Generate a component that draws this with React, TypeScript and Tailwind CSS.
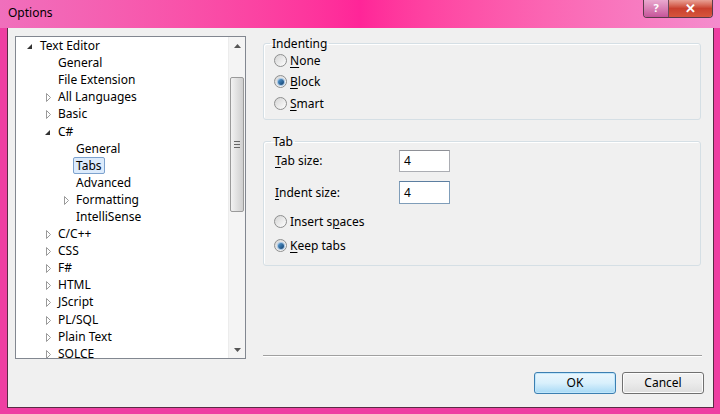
import React from 'react';

type Node = { label: string; level: number; arrow?: 'open' | 'closed'; selected?: boolean };

const tree: Node[] = [
    { label: 'Text Editor', level: 0, arrow: 'open' },
    { label: 'General', level: 1 },
    { label: 'File Extension', level: 1 },
    { label: 'All Languages', level: 1, arrow: 'closed' },
    { label: 'Basic', level: 1, arrow: 'closed' },
    { label: 'C#', level: 1, arrow: 'open' },
    { label: 'General', level: 2 },
    { label: 'Tabs', level: 2, selected: true },
    { label: 'Advanced', level: 2 },
    { label: 'Formatting', level: 2, arrow: 'closed' },
    { label: 'IntelliSense', level: 2 },
    { label: 'C/C++', level: 1, arrow: 'closed' },
    { label: 'CSS', level: 1, arrow: 'closed' },
    { label: 'F#', level: 1, arrow: 'closed' },
    { label: 'HTML', level: 1, arrow: 'closed' },
    { label: 'JScript', level: 1, arrow: 'closed' },
    { label: 'PL/SQL', level: 1, arrow: 'closed' },
    { label: 'Plain Text', level: 1, arrow: 'closed' },
    { label: 'SOLCE', level: 1, arrow: 'closed' },
];

const indent = ['pl-[8px]', 'pl-[26px]', 'pl-[44px]'];

const Arrow = ({ kind }: { kind?: 'open' | 'closed' }) => {
    if (kind === 'open') {
        return (
            <svg width="13" height="17" viewBox="0 0 13 17">
                <polygon points="8,7 8,12 3,12" fill="#333" />
            </svg>
        );
    }
    if (kind === 'closed') {
        return (
            <svg width="13" height="17" viewBox="0 0 13 17">
                <polygon points="4.5,5.5 8.5,9.5 4.5,13.5" fill="#fff" stroke="#9a9a9a" strokeWidth="1" />
            </svg>
        );
    }
    return <span className="w-[13px]" />;
};

const Radio = ({ checked, children }: { checked?: boolean; children: React.ReactNode }) => (
    <div className="flex items-center h-[21px] pl-[10px]">
        <span className="w-[13px] h-[13px] rounded-full border border-[#8e8f8f] bg-gradient-to-br from-[#d4d4d4] to-white flex items-center justify-center">
            {checked && <span className="w-[6px] h-[6px] rounded-full bg-gradient-to-br from-[#5aa0d8] to-[#0f3f6e] shadow-[0_0_0_1px_#a9c7e4]" />}
        </span>
        <span className="ml-[3px]">{children}</span>
    </div>
);

const u = (s: string) => <span className="underline underline-offset-2">{s}</span>;

export default function App() {
    return (
        <div className="w-[720px] h-[414px] bg-[#ee3fa2] flex flex-col text-[12px] text-black overflow-hidden" style={{ fontFamily: '"Noto Sans", "Open Sans", sans-serif' }}>
            {/* title bar */}
            <div className="h-[28px] flex items-start relative bg-gradient-to-r from-[#f06fbc] via-[#ff2598] to-[#f48ccd]">
                <span className="ml-[8px] mt-[4px] text-[12px]">Options</span>
                <div className="ml-auto mr-[7px] flex h-[18px] border border-[#5a3a4a] border-t-0 rounded-b-[4px] overflow-hidden">
                    <div className="w-[25px] bg-gradient-to-b from-[#e9a9cf] to-[#c5549a] flex items-center justify-center text-white font-bold text-[11px] border-r border-[#6a4a5a]">?</div>
                    <div className="w-[43px] bg-gradient-to-b from-[#e8a095] via-[#c9402e] to-[#d6553c] flex items-center justify-center text-white font-bold text-[13px]">✕</div>
                </div>
            </div>

            {/* client */}
            <div className="ml-[7px] mr-[6px] h-[380px] border-l border-r border-b border-[#5a2a45] bg-[#f0f0f0] flex pt-[8px]">
                {/* tree */}
                <div className="ml-[7px] w-[231px] h-[323px] border border-[#828790] bg-white flex overflow-hidden">
                    <div className="flex-1">
                        {tree.map((n, idx) => (
                            <div key={idx} className={`h-[17.1px] flex items-center ${indent[n.level]}`}>
                                <Arrow kind={n.arrow} />
                                <span className={`h-[17px] leading-[15px] px-[2px] border rounded-[2px] ${n.selected ? 'border-[#7da2ce] bg-[#dcebfc]' : 'border-transparent'}`}>{n.label}</span>
                            </div>
                        ))}
                    </div>
                    {/* scrollbar */}
                    <div className="w-[17px] h-full bg-[#f4f4f4] border-l border-[#ececec] flex flex-col items-center">
                        <div className="h-[17px] flex items-center justify-center">
                            <svg width="7" height="4" viewBox="0 0 7 4"><polygon points="0,4 3.5,0 7,4" fill="#555" /></svg>
                        </div>
                        <div className="mt-[23px] w-[14px] h-[135px] rounded-[2px] border border-[#9a9a9a] bg-gradient-to-r from-[#f2f2f2] via-[#e0e0e0] to-[#cfcfcf] flex flex-col items-center justify-center gap-[2px]">
                            <span className="w-[6px] h-px bg-[#666]" />
                            <span className="w-[6px] h-px bg-[#666]" />
                            <span className="w-[6px] h-px bg-[#666]" />
                        </div>
                        <div className="mt-auto h-[17px] flex items-center justify-center">
                            <svg width="7" height="4" viewBox="0 0 7 4"><polygon points="0,0 3.5,4 7,0" fill="#555" /></svg>
                        </div>
                    </div>
                </div>

                {/* right column */}
                <div className="ml-[17px] w-[439px] flex flex-col">
                    <fieldset className="w-[438px] h-[84px] border border-[#d5dfe5] rounded-[3px] shadow-[inset_1px_1px_0_#fff]">
                        <legend className="ml-[6px] px-[2px] leading-[15px]">Indenting</legend>
                        <div className="flex flex-col mt-[-1px]">
                            <Radio>{u('N')}one</Radio>
                            <Radio checked>{u('B')}lock</Radio>
                            <div className="mt-[1px]">
                                <Radio>{u('S')}mart</Radio>
                            </div>
                        </div>
                    </fieldset>

                    <fieldset className="mt-[14px] w-[438px] h-[132px] border border-[#d5dfe5] rounded-[3px] shadow-[inset_1px_1px_0_#fff]">
                        <legend className="ml-[7px] px-[2px] leading-[15px]">Tab</legend>
                        <div className="flex flex-col">
                            <div className="flex items-center h-[22px] mt-[1px]">
                                <span className="pl-[11px] w-[135px]">{u('T')}ab size:</span>
                                <div className="w-[51px] h-[22px] border border-[#abadb3] border-t-[#8e9096] bg-white px-[4px] leading-[20px]">4</div>
                            </div>
                            <div className="flex items-center h-[23px] mt-[9px]">
                                <span className="pl-[11px] w-[135px]">{u('I')}ndent size:</span>
                                <div className="w-[51px] h-[23px] border border-[#7f9db9] border-t-[#5c7ea0] bg-white px-[4px] leading-[21px]">4</div>
                            </div>
                            <div className="mt-[7px]">
                                <Radio>Insert s{u('p')}aces</Radio>
                            </div>
                            <div className="mt-[3px]">
                                <Radio checked>{u('K')}eep tabs</Radio>
                            </div>
                        </div>
                    </fieldset>

                    <div className="mt-auto h-px bg-[#a0a0a0] border-b border-white box-content" />
                    <div className="flex justify-end gap-[6px] mt-[15px] mb-[13px] -mr-[2px]">
                        <button className="w-[82px] h-[22px] rounded-[3px] border border-[#3c7fb1] bg-gradient-to-b from-[#eaf6fd] via-[#d9f0fc] to-[#a7d9f5] shadow-[inset_0_0_0_1px_#c0e6fb]">OK</button>
                        <button className="w-[82px] h-[22px] rounded-[3px] border border-[#707070] bg-gradient-to-b from-[#f2f2f2] via-[#ebebeb] to-[#dddddd] shadow-[inset_0_0_0_1px_#fcfcfc]">Cancel</button>
                    </div>
                </div>
            </div>
        </div>
    );
}
